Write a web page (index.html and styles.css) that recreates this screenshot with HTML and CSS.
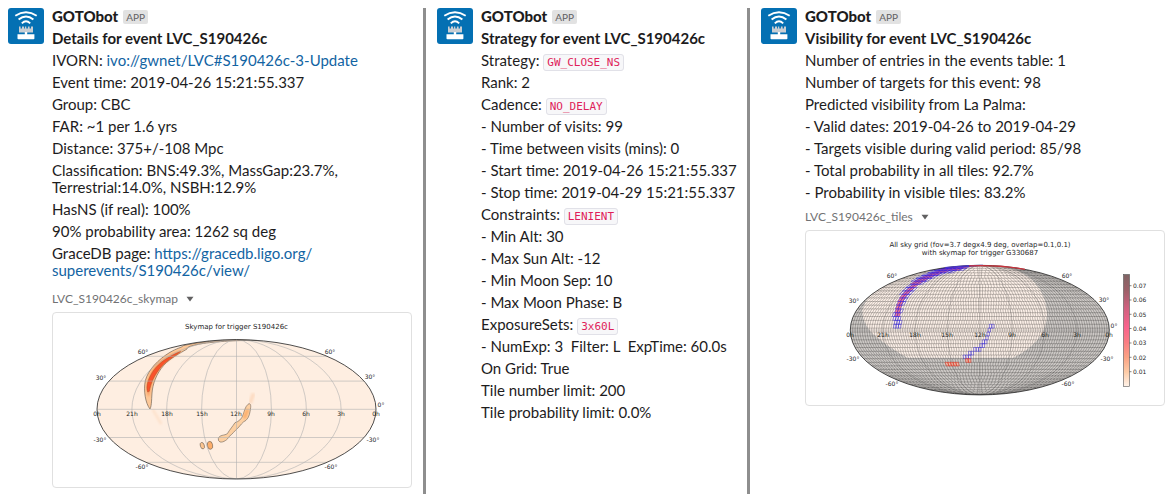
FILE: index.html
```html
<!DOCTYPE html>
<html lang="en">
<head>
<meta charset="utf-8">
<title>GOTObot event LVC_S190426c</title>
<link rel="stylesheet" href="styles.css">
</head>
<body>
<svg class="defs" width="0" height="0" aria-hidden="true">
  <symbol id="avatar" viewBox="0 0 36 36">
    <rect width="36" height="36" rx="3" fill="#0470b3"/>
    <g fill="none" stroke="#fff" stroke-width="1.9">
      <path d="M7.3 7.8Q18 .8 28.7 7.8"/>
      <path d="M10.6 11.6Q18 5.6 25.4 11.6"/>
      <path d="M13.8 15.4Q18 11.2 22.2 15.4"/>
    </g>
    <path d="M11 18.6h1.6v1.8h1.4v-1.8h2v1.8h.9v-1.8h1.4v1.8h1.6v-1.8h1.7v1.8h1.4v-1.8h2v5.8H11z" fill="#c9ced3"/>
    <path d="M16.8 24h2.4v2.2h7.2v4.2q0 .8-.8.8H10.300q-.8 0-.8-.8v-4.200h7.300z" fill="#fff"/>
  </symbol>
</svg>
<main class="board">
  <article class="message">
    <svg class="avatar" role="img" aria-label="GOTObot"><use href="#avatar"/></svg>
    <div class="content">
      <header class="head"><strong class="name">GOTObot</strong><span class="badge">APP</span></header>
      <h2 class="title">Details for event LVC_S190426c</h2>
      <p class="line">IVORN: <a class="link" href="ivo://gwnet/LVC#S190426c-3-Update">ivo://gwnet/LVC#S190426c-3-Update</a></p>
      <p class="line">Event time: 2019-04-26 15:21:55.337</p>
      <p class="line">Group: CBC</p>
      <p class="line">FAR: ~1 per 1.6 yrs</p>
      <p class="line">Distance: 375+/-108 Mpc</p>
      <p class="line">Classification: BNS:49.3%, MassGap:23.7%,<br>Terrestrial:14.0%, NSBH:12.9%</p>
      <p class="line">HasNS (if real): 100%</p>
      <p class="line">90% probability area: 1262 sq deg</p>
      <p class="line line-page">GraceDB page: <a class="link" href="https://gracedb.ligo.org/superevents/S190426c/view/">https://gracedb.ligo.org/<br>superevents/S190426c/view/</a></p>
      <button class="file" type="button">LVC_S190426c_skymap<svg class="caret" viewBox="0 0 8 6"><path d="M.5.8h7L4 5.600z"/></svg></button>
      <div class="card">
        <svg class="plot" viewBox="1 1 358 174" role="img" aria-label="Skymap for trigger S190426c">
          <defs>
            <clipPath id="sky1"><ellipse cx="184.500" cy="97.300" rx="139.500" ry="69.700"/></clipPath>
            <filter id="soft"><feGaussianBlur stdDeviation="3"/></filter>
          </defs>
          <ellipse cx="184.500" cy="97.300" rx="139.500" ry="69.700" fill="#feeee1"/>
          <g clip-path="url(#sky1)">
            <g transform="translate(-2 -2) scale(.33333)" stroke-linejoin="round">
              <path d="M300 297C286 280 280 240 286 212C294 180 325 148 360 127C380 115 394 113 400 107C440 97 490 92 560 88L620 91C540 91 470 97 440 104C425 107 412 110 411 117C402 123 375 136 350 157C325 180 311 212 307 240C304 265 306 285 300 297Z" fill="#fdc898" stroke="#6b5e50" stroke-width="2"/>
              <path d="M296 262C287 240 293 205 305 185C322 157 355 134 393 122C385 133 355 145 335 168C312 192 302 225 296 262Z" fill="#fb8d4c" filter="url(#soft)"/>
              <path d="M293 246C286 228 296 203 310 182C328 158 358 137 392 124C382 135 353 149 334 170C312 196 302 220 298 244Z" fill="#f9532a" stroke="#b0562c" stroke-width="1.500"/>
              <path d="M308 298L334 342" stroke="#fde2cc" stroke-width="8" filter="url(#soft)"/>
              <path d="M600 280L611 250" stroke="#fddcc2" stroke-width="12" filter="url(#soft)"/>
              <path d="M505 386C507 374 524 377 532 371C540 358 548 349 555 338C566 335 575 327 579 315C584 302 585 291 594 283C600 278 603 284 602 292C600 308 598 322 588 331C577 336 572 346 563 355C554 362 546 374 538 379C533 389 520 398 510 396Q504 393 505 386Z" fill="#fdd0a2" stroke="#7b6d5e" stroke-width="2"/>
              <path d="M594 298L582 325" stroke="#fdae6b" stroke-width="10" filter="url(#soft)"/>
              <ellipse cx="457" cy="407" rx="6" ry="10" transform="rotate(-18 457 407)" fill="#fdc590" stroke="#7b6d5e" stroke-width="2"/>
              <ellipse cx="480" cy="406" rx="8" ry="12" transform="rotate(-12 480 406)" fill="#fdae6b" stroke="#7b6d5e" stroke-width="2"/>
            </g>
            <path d="M184.500 27V168M45 97.300H324M45 69.100H324M45 125.500H324M45 44.300H324M45 150.300H324" class="graticule"/>
            <ellipse class="graticule" cx="184.500" cy="97.300" rx="34.900" ry="69.700"/>
            <ellipse class="graticule" cx="184.500" cy="97.300" rx="69.800" ry="69.700"/>
            <ellipse class="graticule" cx="184.500" cy="97.300" rx="104.600" ry="69.700"/>
          </g>
          <ellipse class="outline" cx="184.500" cy="97.300" rx="139.500" ry="69.700"/>
          <text class="plot-title" x="184.500" y="17">Skymap for trigger S190426c</text>
          <g class="tick">
            <text x="45" y="104">0h</text><text x="80" y="104">21h</text><text x="115" y="104">18h</text><text x="150" y="104">15h</text><text x="184" y="104">12h</text><text x="219" y="104">9h</text><text x="254" y="104">6h</text><text x="289" y="104">3h</text><text x="324" y="104">0h</text>
            <text x="91" y="42">60°</text><text x="49" y="68">30°</text><text x="48" y="130">-30°</text><text x="90" y="157">-60°</text>
            <text x="278" y="42">60°</text><text x="318" y="67">30°</text><text x="329" y="95">0°</text><text x="321" y="130">-30°</text><text x="279" y="157">-60°</text>
          </g>
        </svg>
      </div>
    </div>
  </article>

  <div class="divider"></div>

  <article class="message">
    <svg class="avatar" role="img" aria-label="GOTObot"><use href="#avatar"/></svg>
    <div class="content">
      <header class="head"><strong class="name">GOTObot</strong><span class="badge">APP</span></header>
      <h2 class="title">Strategy for event LVC_S190426c</h2>
      <p class="line">Strategy: <code class="code">GW_CLOSE_NS</code></p>
      <p class="line">Rank: 2</p>
      <p class="line">Cadence: <code class="code">NO_DELAY</code></p>
      <p class="line">- Number of visits: 99</p>
      <p class="line">- Time between visits (mins): 0</p>
      <p class="line">- Start time: 2019-04-26 15:21:55.337</p>
      <p class="line">- Stop time: 2019-04-29 15:21:55.337</p>
      <p class="line">Constraints: <code class="code">LENIENT</code></p>
      <p class="line">- Min Alt: 30</p>
      <p class="line">- Max Sun Alt: -12</p>
      <p class="line">- Min Moon Sep: 10</p>
      <p class="line">- Max Moon Phase: B</p>
      <p class="line">ExposureSets: <code class="code">3x60L</code></p>
      <p class="line">- NumExp: 3&nbsp; Filter: L&nbsp; ExpTime: 60.0s</p>
      <p class="line">On Grid: True</p>
      <p class="line">Tile number limit: 200</p>
      <p class="line">Tile probability limit: 0.0%</p>
    </div>
  </article>

  <div class="divider"></div>

  <article class="message">
    <svg class="avatar" role="img" aria-label="GOTObot"><use href="#avatar"/></svg>
    <div class="content">
      <header class="head"><strong class="name">GOTObot</strong><span class="badge">APP</span></header>
      <h2 class="title">Visibility for event LVC_S190426c</h2>
      <p class="line">Number of entries in the events table: 1</p>
      <p class="line">Number of targets for this event: 98</p>
      <p class="line">Predicted visibility from La Palma:</p>
      <p class="line">- Valid dates: 2019-04-26 to 2019-04-29</p>
      <p class="line">- Targets visible during valid period: 85/98</p>
      <p class="line">- Total probability in all tiles: 92.7%</p>
      <p class="line">- Probability in visible tiles: 83.2%</p>
      <button class="file" type="button">LVC_S190426c_tiles<svg class="caret" viewBox="0 0 8 6"><path d="M.5.8h7L4 5.600z"/></svg></button>
      <div class="card">
        <svg class="plot" viewBox="1 1 358 174" role="img" aria-label="All sky grid with skymap for trigger G330687">
          <defs>
            <clipPath id="sky2"><ellipse cx="174.800" cy="100.100" rx="129.500" ry="64.800"/></clipPath>
            <linearGradient id="bar" x1="0" y1="0" x2="0" y2="1">
              <stop offset="0" stop-color="#806464"/><stop offset=".14" stop-color="#9c6068"/>
              <stop offset=".3" stop-color="#d0607f"/><stop offset=".47" stop-color="#f9628c"/>
              <stop offset=".6" stop-color="#f97b83"/><stop offset=".74" stop-color="#fba283"/>
              <stop offset=".87" stop-color="#fdcba6"/><stop offset="1" stop-color="#fff3ea"/>
            </linearGradient>
          </defs>
          <g clip-path="url(#sky2)">
            <rect x="45" y="35" width="260" height="131" fill="#cfcbc8"/>
            <path transform="translate(-5 -30) scale(.33333)" fill="#fdf1e9" d="M262 235Q200 285 187 330Q187 380 235 415Q270 445 322 473H640Q680 455 712 420Q742 385 741 340Q740 290 705 248Q670 212 610 197L560 180H400Z"/>
            <g id="grid"></g>
            <g class="meridian">
              <path d="M174.800 35V165M45 100.100H305"/>
              <ellipse cx="174.800" cy="100.100" rx="32.400" ry="64.800"/>
              <ellipse cx="174.800" cy="100.100" rx="64.800" ry="64.800"/>
              <ellipse cx="174.800" cy="100.100" rx="97.100" ry="64.800"/>
            </g>
            <g id="targets"></g>
          </g>
          <ellipse class="outline" cx="174.800" cy="100.100" rx="129.500" ry="64.800"/>
          <path d="M140 37.700Q157 35.700 178 35.400" fill="none" stroke="#4a36c8" stroke-width="1.200"/>
          <path d="M164 35.900Q195 34.600 220 39.300" fill="none" stroke="#c9333c" stroke-width="1.200"/>
          <text class="plot-title" x="175" y="17">All sky grid (fov=3.7 degx4.9 deg, overlap=0.1,0.1)</text>
          <text class="plot-title" x="175" y="25">with skymap for trigger G330687</text>
          <g class="tick">
            <text x="45" y="107">0h</text><text x="78" y="107">21h</text><text x="110" y="107">18h</text><text x="142" y="107">15h</text><text x="175" y="107">12h</text><text x="207" y="107">9h</text><text x="240" y="107">6h</text><text x="272" y="107">3h</text><text x="304" y="107">0h</text>
            <text x="87" y="48">60°</text><text x="49" y="73">30°</text><text x="48" y="131">-30°</text><text x="87" y="156">-60°</text>
            <text x="262" y="48">60°</text><text x="299" y="72">30°</text><text x="309" y="98">0°</text><text x="302" y="131">-30°</text><text x="263" y="156">-60°</text>
          </g>
          <rect x="318.500" y="44.500" width="6" height="112" fill="url(#bar)" stroke="#555" stroke-width=".6"/>
          <path d="M324.500 55.700h2M324.500 70h2M324.500 84.300h2M324.500 98.500h2M324.500 113h2M324.500 127.300h2M324.500 141.700h2" stroke="#333" stroke-width=".6"/>
          <g class="tick tick-bar">
            <text x="328" y="58">0.07</text><text x="328" y="72">0.06</text><text x="328" y="87">0.05</text><text x="328" y="101">0.04</text><text x="328" y="115">0.03</text><text x="328" y="130">0.02</text><text x="328" y="144">0.01</text>
          </g>
        </svg>
      </div>
    </div>
  </article>
</main>
<script src="grid.js"></script>
</body>
</html>
```

FILE: styles.css
```css
* { box-sizing: border-box; }

body {
  margin: 0;
  background: #fff;
  color: #1d1c1d;
  font: 15px/17px Lato, "Open Sans", sans-serif;
}

.defs { position: absolute; }

.board {
  display: grid;
  grid-template-columns: minmax(0, 404fr) 3px minmax(0, 299fr) 3px minmax(0, 404fr);
  column-gap: 11px;
  min-height: 100vh;
  padding: 8px 6px 8px 8px;
}

.divider { background: #8e8e8e; }

.message {
  display: flex;
  gap: 8px;
  align-items: flex-start;
}

.avatar {
  flex: none;
  width: 36px;
  height: 36px;
}

.content {
  flex: 1;
  min-width: 0;
}

.head {
  display: flex;
  align-items: center;
  gap: 5px;
  height: 17px;
  margin-bottom: 5px;
}

.name { font-weight: 900; }

.badge {
  padding: 0 3px;
  border-radius: 2px;
  background: #e2e2e2;
  color: #616061;
  font-size: 10px;
  line-height: 14px;
}

.title {
  margin: 0 0 5px;
  font-size: 15px;
  font-weight: 700;
}

.line {
  margin: 0 0 5px;
  white-space: nowrap;
}

.line-page { margin-bottom: 12px; }

.link {
  color: #1264a3;
  text-decoration: none;
}

.code {
  padding: 1px 3px;
  border: 1px solid #e1e1e8;
  border-radius: 3px;
  background: #f7f7f9;
  color: #e01e5a;
  font: 11px/11px "DejaVu Sans Mono", monospace;
}

.file {
  display: flex;
  align-items: center;
  gap: 8px;
  margin: 8px 0 5px;
  padding: 0;
  border: 0;
  background: none;
  color: #717274;
  font: 12px/16px Lato, "Open Sans", sans-serif;
}

.caret {
  width: 8px;
  height: 6px;
  fill: #616061;
}

.card {
  overflow: hidden;
  border: 1px solid #e0e0e0;
  border-radius: 4px;
}

.plot {
  display: block;
  width: 100%;
  font-family: "DejaVu Sans", sans-serif;
  fill: #262626;
}

.plot-title {
  font-size: 7px;
  text-anchor: middle;
}

.tick {
  font-size: 6px;
  text-anchor: middle;
}

.tick-bar { text-anchor: start; }

.graticule {
  fill: none;
  stroke: #b0b0b0;
  stroke-width: 0.6;
}

.meridian {
  fill: none;
  stroke: #555;
  stroke-width: 0.4;
  opacity: 0.6;
}

.outline {
  fill: none;
  stroke: #222;
  stroke-width: 0.8;
}
```

FILE: grid.js
```js
// Tiled all-sky grid in Mollweide projection, with the target tiles marked.
const CX = 174.8, CY = 100.1, A = 129.5, B = 64.8;
const rad = Math.PI / 180;

function project(lon, dec) {
  let t = dec * rad;
  if (Math.abs(dec) > 89.9) {
    t = Math.sign(dec) * Math.PI / 2;
  } else {
    for (let i = 0; i < 12; i++) {
      t -= (2 * t + Math.sin(2 * t) - Math.PI * Math.sin(dec * rad)) / (2 + 2 * Math.cos(2 * t));
    }
  }
  return [CX + A * lon / 180 * Math.cos(t), CY - B * Math.sin(t)];
}

function distance(p, line) {
  let best = Infinity;
  for (let i = 1; i < line.length; i++) {
    const [x1, y1] = line[i - 1], [x2, y2] = line[i];
    const dx = x2 - x1, dy = y2 - y1;
    const k = Math.max(0, Math.min(1, ((p[0] - x1) * dx + (p[1] - y1) * dy) / (dx * dx + dy * dy)));
    best = Math.min(best, Math.hypot(p[0] - x1 - k * dx, p[1] - y1 - k * dy));
  }
  return best;
}

const north = [[92.7, 96], [92.3, 84], [94.5, 74], [101, 63], [111, 53], [125, 45.5], [141, 39.5], [160, 36.5]];
const south = [[159, 126.7], [164, 126], [168, 122], [174, 118], [179, 113], [182, 107], [184, 101], [187, 95]];
const late = [[141, 133], [153, 133.5]];
const lateTwo = [[162, 130], [165, 130]];

const cell = c => 'M' + c.map(p => p.map(v => v.toFixed(2)).join(' ')).join('L') + 'Z';
let grid = '', blue = '', core = '', red = '';
const step = 180 / 41;

for (let r = 0; r < 41; r++) {
  const d0 = -90 + r * step, d1 = d0 + step, dm = (d0 + d1) / 2;
  const n = Math.max(3, Math.ceil(360 * Math.cos(dm * rad) / 3.33));
  for (let i = 0; i < n; i++) {
    const a = -180 + 360 * i / n, b = a + 360 / n;
    const c = cell([project(a, d0), project(b, d0), project(b, d1), project(a, d1)]);
    const mid = project((a + b) / 2, dm);
    grid += c;
    const dn = distance(mid, north);
    if (dn < 3.4) blue += c;
    if (dn < 2 && mid[1] < 88) core += c;
    if (distance(mid, south) < 1.7) blue += c;
    if (distance(mid, late) < 1.8 || distance(mid, lateTwo) < 1.3) red += c;
  }
}

document.getElementById('grid').innerHTML =
  `<path d="${grid}" fill="none" stroke="#000" stroke-opacity=".42" stroke-width=".3"/>`;
document.getElementById('targets').innerHTML =
  `<path d="${core}" fill="#f0506e" fill-opacity=".7"/>` +
  `<path d="${blue}" fill="none" stroke="#2a1cf0" stroke-opacity=".75" stroke-width=".5"/>` +
  `<path d="${red}" fill="#fdae8b" fill-opacity=".5" stroke="#f03020" stroke-width=".5"/>`;
```
